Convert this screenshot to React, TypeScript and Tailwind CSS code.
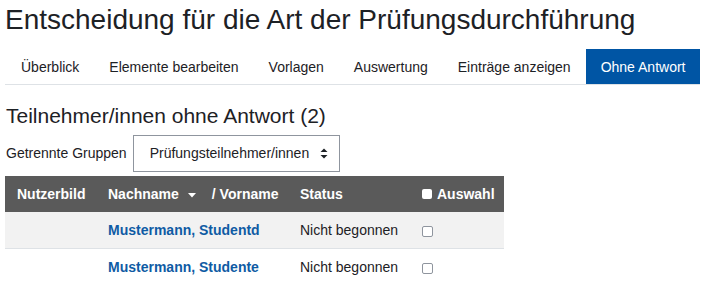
import React from "react";

const tabs = ["Überblick", "Elemente bearbeiten", "Vorlagen", "Auswertung", "Einträge anzeigen", "Ohne Antwort"];

const rows = [
  { name: "Mustermann, Studentd", status: "Nicht begonnen", bg: "bg-[#f2f2f2]" },
  { name: "Mustermann, Studente", status: "Nicht begonnen", bg: "bg-white" },
];

export default function App() {
  return (
    <div className="w-[713px] h-[287px] overflow-hidden bg-white pl-[5px] font-['Liberation_Sans',Arial,sans-serif] text-[#1d2125]">
      <h2 className="pt-[3px] text-[28px] leading-[1.2] font-normal whitespace-nowrap">
        Entscheidung für die Art der Prüfungsdurchführung
      </h2>

      <nav className="mt-[12px] inline-flex border-b border-[#dee2e6] pl-px">
        {tabs.map((t) => {
          const active = t === "Ohne Antwort";
          return (
            <div
              key={t}
              className={
                active
                  ? "px-[15px] pt-2 pb-[7px] text-[14px] leading-5 whitespace-nowrap bg-[#0055a4] text-white"
                  : "px-[15px] pt-2 pb-[7px] text-[14px] leading-5 whitespace-nowrap text-[#1d2125]"
              }
            >
              {t}
            </div>
          );
        })}
      </nav>

      <h3 className="mt-[18px] pl-px text-[21px] leading-[1.2] font-normal whitespace-nowrap">
        Teilnehmer/innen ohne Antwort (2)
      </h3>

      <div className="mt-[7px] flex items-center gap-[6px] pl-px">
        <span className="text-[14px] leading-5 whitespace-nowrap">Getrennte Gruppen</span>
        <div className="flex h-[37px] w-[207px] items-center justify-between border border-[#8f959e] pl-[16px] pr-[11px] text-[14px] leading-5 text-[#1d2125]">
          <span className="whitespace-nowrap">Prüfungsteilnehmer/innen</span>
          <svg width="8" height="11" viewBox="0 0 8 11" className="mt-px">
            <path d="M4 0.5 L7.5 4 L0.5 4 Z" fill="#1d2125" />
            <path d="M0.5 7 L7.5 7 L4 10.5 Z" fill="#1d2125" />
          </svg>
        </div>
      </div>

      <table className="mt-[4px] w-[499px] border-collapse text-[14px] leading-5 table-fixed">
        <colgroup>
          <col className="w-[91px]" />
          <col className="w-[192px]" />
          <col className="w-[122px]" />
          <col className="w-[94px]" />
        </colgroup>
        <thead>
          <tr className="bg-[#5a5a5a] text-white font-bold">
            <th className="px-3 py-2 text-left font-bold whitespace-nowrap">Nutzerbild</th>
            <th className="px-3 py-2 text-left font-bold whitespace-nowrap">
              <span className="inline-flex items-center">
                <span>Nachname</span>
                <svg width="8" height="5" viewBox="0 0 8 5" className="ml-[9px] mt-[3px]">
                  <path d="M0 0 L8 0 L4 4.5 Z" fill="#ffffff" />
                </svg>
                <span className="ml-[16px]">/ Vorname</span>
              </span>
            </th>
            <th className="px-3 py-2 text-left font-bold whitespace-nowrap">Status</th>
            <th className="px-3 py-2 text-left font-bold whitespace-nowrap">
              <span className="inline-flex items-center">
                <span className="inline-block h-[10px] w-[10px] rounded-[2px] bg-white" />
                <span className="ml-[5px]">Auswahl</span>
              </span>
            </th>
          </tr>
        </thead>
        <tbody>
          {rows.map((r, i) => (
            <tr key={r.name} className={i > 0 ? `${r.bg} border-t border-[#dee2e6]` : r.bg}>
              <td className="px-3 py-2" />
              <td className="px-3 py-2 font-bold text-[#0f5ba4] whitespace-nowrap">{r.name}</td>
              <td className="px-3 py-2 whitespace-nowrap">{r.status}</td>
              <td className="px-3 py-2">
                <span className="mt-[3px] block h-[11px] w-[11px] rounded-[2px] border border-[#8f959e] bg-white" />
              </td>
            </tr>
          ))}
        </tbody>
      </table>
    </div>
  );
}
